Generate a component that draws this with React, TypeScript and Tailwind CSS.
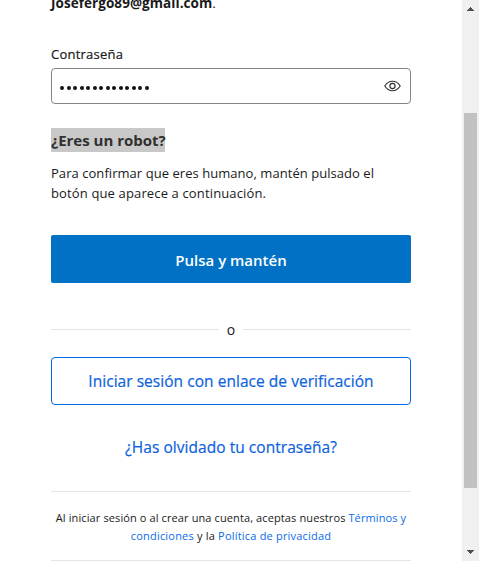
function Divider({ className = "" }: { className?: string }) {
  return <div className={`h-px bg-[#e5e5e5] ${className}`} />;
}

export default function App() {
  return (
    <div className="flex h-[561px] w-[479px] overflow-hidden bg-white font-['Open_Sans','Noto_Sans',sans-serif] text-[#1a1a1a]">
      <main className="ml-[51px] mr-[51px] flex h-full w-[360px] shrink-0 flex-col whitespace-nowrap">
        <p className="-mt-[7px] h-5 text-[13.5px] leading-5 tracking-[0.06px]">
          <strong className="font-bold">Josefergo89@gmail.com</strong>.
        </p>
        <label className="mt-[31px] h-5 text-[13px] leading-5 tracking-[0.23px] [-webkit-text-stroke:0.2px_currentColor]">Contraseña</label>
        <div className="mt-1 flex h-9 items-center justify-between rounded-[4px] border border-[#858585] pl-2 pr-[9px]">
          <div className="mt-1 flex gap-[2.5px]">
            {Array.from({ length: 14 }, (_, i) => (
              <span key={i} className="size-1 rounded-full bg-[#111]" />
            ))}
          </div>
          <svg width="17" height="12" viewBox="0 0 17 12" fill="none" stroke="#2b2b2b" strokeWidth="1.1">
            <path d="M.8 6C4.8-.3 12.2-.3 16.2 6 12.2 12.3 4.8 12.3.8 6Z" />
            <circle cx="8.5" cy="6" r="2.6" />
          </svg>
        </div>
        <h2 className="mt-6 h-6 w-[114px] bg-[#c8c8c8] text-[15px] font-bold leading-6 text-[#303030]">¿Eres un robot?</h2>
        <p className="mt-[11px] h-10 text-[13px] leading-5">
          <span className="tracking-[0.05px]">Para confirmar que eres humano, mantén pulsado el</span><br />
          <span className="tracking-[0.14px]">botón que aparece a continuación.</span>
        </p>
        <button className="mt-8 h-12 rounded-[2px] bg-[#0071c5] pt-[2px] text-[15px] font-semibold text-white">Pulsa y mantén</button>
        <div className="mt-9 flex h-5 items-center">
          <Divider className="flex-1" />
          <span className="w-6 pt-px text-center text-[14px] leading-5">o</span>
          <Divider className="flex-1" />
        </div>
        <button className="mt-[18px] h-12 rounded-[4px] border border-[#0068e0] pt-[2px] text-[15.5px] tracking-[0.04px] text-[#0d62dc] [-webkit-text-stroke:0.2px_currentColor]">Iniciar sesión con enlace de verificación</button>
        <a className="mt-[30px] h-6 text-center text-[15.5px] leading-6 tracking-[0.04px] text-[#0d62dc] [-webkit-text-stroke:0.2px_currentColor]">¿Has olvidado tu contraseña?</a>
        <Divider className="mt-[32px]" />
        <p className="mt-[17px] h-9 text-center text-[11px] leading-[18px] tracking-[0.11px]">
          Al iniciar sesión o al crear una cuenta, aceptas nuestros <a className="text-[#086bea]">Términos y<br /><span className="tracking-[0.2px]">condiciones</span></a><span className="tracking-[0.2px]"> y la <a className="text-[#086bea]">Política de privacidad</a></span>
        </p>
        <Divider className="mt-[15px]" />
      </main>
      <aside className="flex w-[17px] shrink-0 flex-col items-center bg-[#f0f0f0]">
        <svg className="mt-[7px] shrink-0" width="7" height="4" shapeRendering="crispEdges"><path d="M3 0h1v1h1v1h1v1h1v1H0V3h1V2h1V1h1z" fill="#505050" /></svg>
        <div className="mt-[102px] h-[375px] w-[13px] shrink-0 bg-[#c1c1c1]" />
        <svg className="mt-[62px] shrink-0" width="7" height="4" shapeRendering="crispEdges"><path d="M0 0h7v1H6v1H5v1H4v1H3V3H2V2H1V1H0z" fill="#505050" /></svg>
      </aside>
    </div>
  );
}
